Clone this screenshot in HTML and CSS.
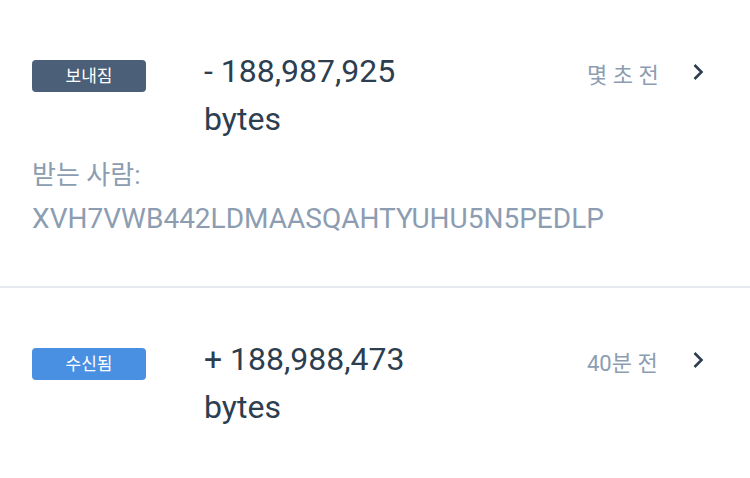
FILE: index.html
```html
<!DOCTYPE html>
<html lang="ko">
  <head>
    <meta charset="UTF-8" />
    <meta name="viewport" content="width=device-width, initial-scale=1.0" />
    <title>Transactions</title>
    <link rel="stylesheet" href="styles.css">
  </head>
  <body>
    <main class="tx__list">
      <section class="tx">
        <div class="tx__row">
          <span class="tx__badge tx__badge--sent">보내짐</span>
          <div class="tx__amount">- 188,987,925<br />bytes</div>
          <span class="tx__time">몇 초 전</span>
          <svg class="tx__chevron" width="14" height="20" viewBox="0 0 14 20">
            <path d="M3.5 3l7 7-7 7" />
          </svg>
        </div>
        <div class="tx__to">
          <p class="tx__label">받는 사람:</p>
          <p class="tx__addr">XVH7VWB442LDMAASQAHTYUHU5N5PEDLP</p>
        </div>
      </section>

      <section class="tx">
        <div class="tx__row">
          <span class="tx__badge tx__badge--received">수신됨</span>
          <div class="tx__amount">+ 188,988,473<br />bytes</div>
          <span class="tx__time">40분 전</span>
          <svg class="tx__chevron" width="14" height="20" viewBox="0 0 14 20">
            <path d="M3.5 3l7 7-7 7" />
          </svg>
        </div>
      </section>
    </main>
  </body>
</html>
```

FILE: styles.css
```css
* {
  margin: 0;
  padding: 0;
  box-sizing: border-box;
}
html {
  font-family: Roboto, "Noto Sans CJK KR", sans-serif;
}
body {
  background-color: #fff;
  color: #2c3e50;
}
.tx {
  padding: 47px 45px 45px 32px;
}
.tx + .tx {
  border-top: 2px solid #e6e9ed;
}
.tx__row {
  display: flex;
  align-items: flex-start;
}
.tx__badge {
  flex: 0 0 114px;
  height: 32px;
  margin: 13px 58px 0 0;
  border-radius: 4px;
  color: #fff;
  font-size: 17px;
  line-height: 32px;
  text-align: center;
}
.tx__badge--sent {
  background-color: #4b5f78;
}
.tx__badge--received {
  background-color: #4a90e2;
}
.tx__amount {
  flex: 1;
  font-size: 32px;
  line-height: 48px;
}
.tx__time {
  flex: 0 0 104px;
  margin-top: 5px;
  font-size: 22px;
  line-height: 48px;
  color: #8c9db1;
}
.tx__chevron {
  flex: 0 0 14px;
  margin-top: 15px;
  fill: none;
  stroke: #2c3e50;
  stroke-width: 2.6;
}
.tx__to {
  margin-top: 10px;
  color: #8c9db1;
}
.tx__label {
  font-size: 26px;
  line-height: 44px;
}
.tx__addr {
  font-size: 28px;
  line-height: 44px;
}
```
